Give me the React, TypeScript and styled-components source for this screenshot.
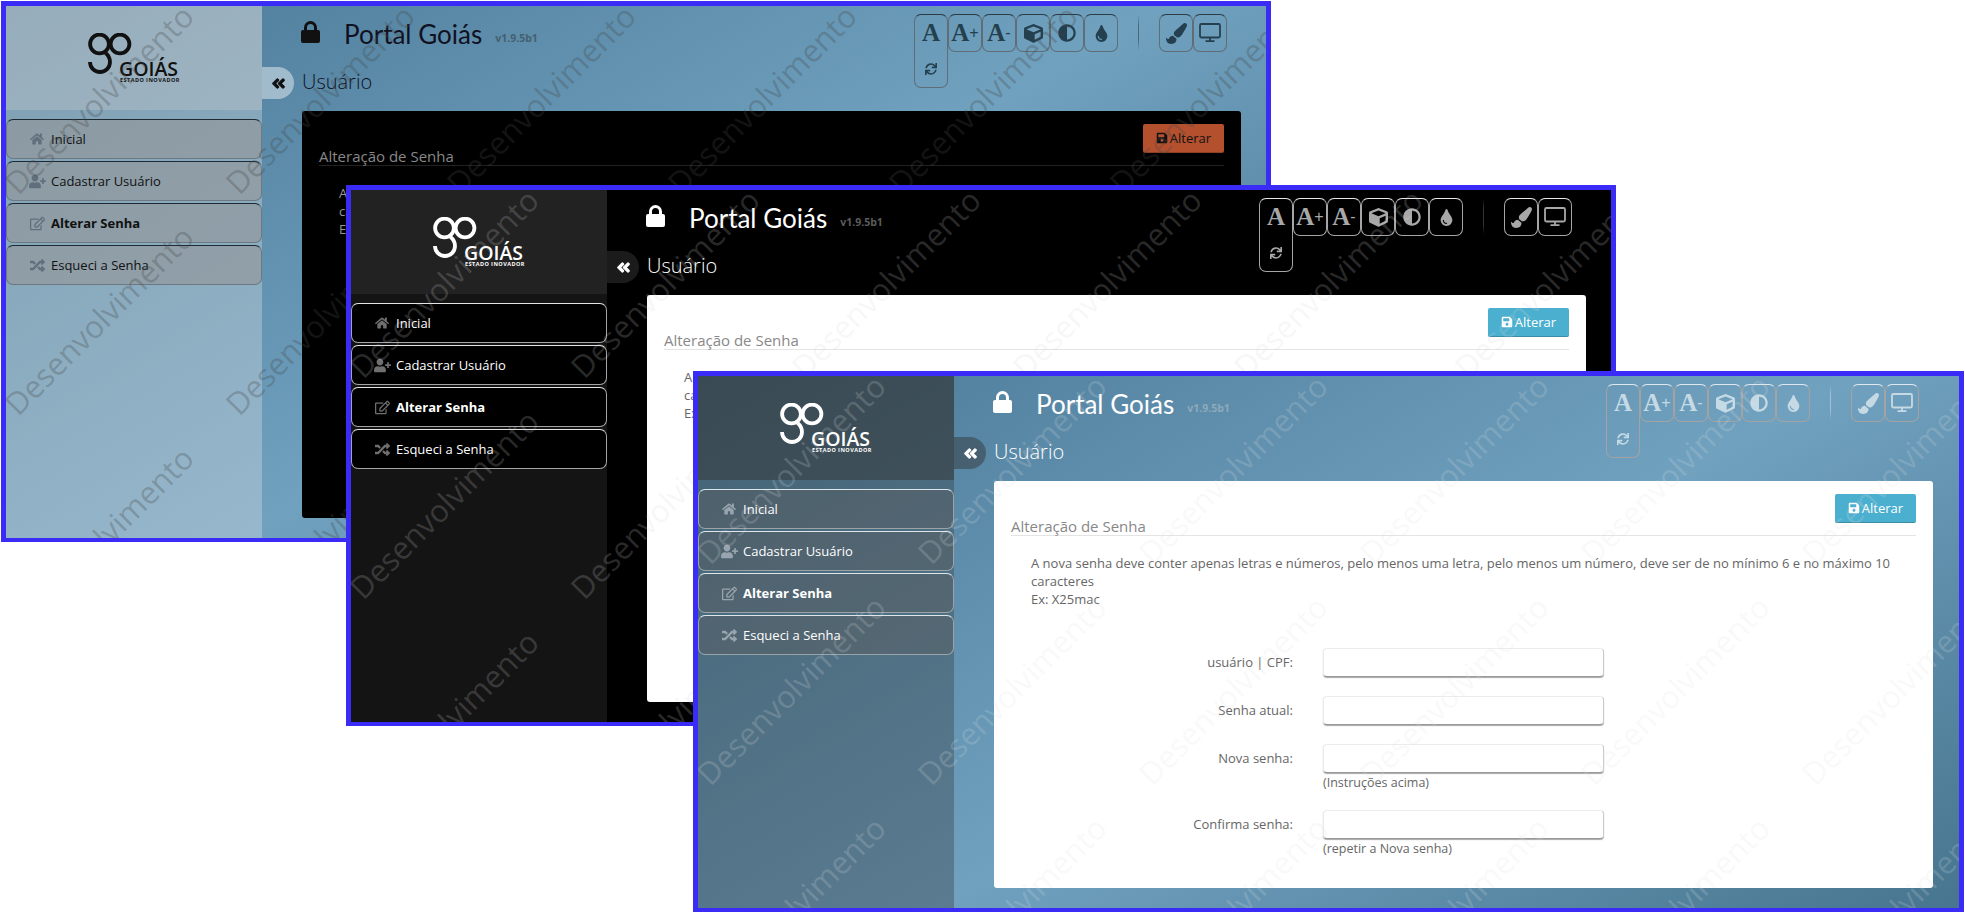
import styled, { createGlobalStyle, ThemeProvider } from "styled-components";
import {
  FaAdjust,
  FaAngleDoubleLeft,
  FaCube,
  FaHome,
  FaPaintBrush,
  FaRandom,
  FaRegEdit,
  FaSave,
  FaSync,
  FaTint,
  FaUserPlus,
} from "react-icons/fa";

const colorSchemes = {
  light: {
    header: "rgba(210, 210, 210, 0.3)",
    sidebar: "rgba(230, 230, 230, 0.33)",
    item: "rgba(148, 148, 148, 0.55)",
    itemTop: "#1d2a33",
    itemBottom: "#6d7880",
    itemText: "#111",
    itemIcon: "#5f707c",
    page: "linear-gradient(150deg, #4b7a98 0%, #70a1bf 53%, #47758f 100%)",
    text: "#111",
    heading: "#112",
    version: "#45606f",
    toggle: "rgba(200, 215, 225, 0.65)",
    toggleIcon: "#111",
    tool: "#24404f",
    toolTop: "#2b3a44",
    toolBottom: "#5f6d76",
    divider: "rgba(40, 60, 75, 0.55)",
    card: "#000",
    title: "#888",
    rule: "#222",
    body: "#999",
    button: "#b5502f",
    buttonText: "#111",
    watermark: "rgba(70, 70, 70, 0.3)",
  },
  contrast: {
    header: "#222",
    sidebar: "#141414",
    item: "#000",
    itemTop: "#e4e4e4",
    itemBottom: "#a5a5a5",
    itemText: "#fff",
    itemIcon: "#6f6f6f",
    page: "#000",
    text: "#fff",
    heading: "#fff",
    version: "#5c5c5c",
    toggle: "#1b1b1b",
    toggleIcon: "#fff",
    tool: "#a8a8a8",
    toolTop: "#e8e8e8",
    toolBottom: "#a5a5a5",
    divider: "#333",
    card: "#fff",
    title: "#888",
    rule: "#e4e4e4",
    body: "#666",
    button: "#4bafcf",
    buttonText: "#fff",
    watermark: "rgba(215, 215, 215, 0.2)",
  },
  dark: {
    header: "rgba(48, 48, 48, 0.47)",
    sidebar: "rgba(48, 48, 48, 0.33)",
    item: "rgba(90, 90, 90, 0.4)",
    itemTop: "#dfe6ea",
    itemBottom: "#9aa3a8",
    itemText: "#fff",
    itemIcon: "#98a5ae",
    page: "linear-gradient(150deg, #4b7a98 0%, #70a1bf 53%, #47758f 100%)",
    text: "#fff",
    heading: "#fff",
    version: "#8fa9ba",
    toggle: "rgba(48, 48, 48, 0.45)",
    toggleIcon: "#fff",
    tool: "#c6dae6",
    toolTop: "#dfe8ee",
    toolBottom: "#a3a3a3",
    divider: "rgba(200, 220, 232, 0.55)",
    card: "#fff",
    title: "#888",
    rule: "#e4e4e4",
    body: "#666",
    button: "#4bafcf",
    buttonText: "#fff",
    watermark: "rgba(225, 225, 225, 0.2)",
  },
};

const windows = [
  { scheme: colorSchemes.light, left: 1, top: 1, width: 1260 },
  { scheme: colorSchemes.contrast, left: 346, top: 185, width: 1260 },
  { scheme: colorSchemes.dark, left: 693, top: 371, width: 1261 },
];

const menuItems = [
  { label: "Inicial", icon: <FaHome size={14} /> },
  { label: "Cadastrar Usuário", icon: <FaUserPlus size={17} /> },
  { label: "Alterar Senha", icon: <FaRegEdit size={15} />, active: true },
  { label: "Esqueci a Senha", icon: <FaRandom size={15} /> },
];

const formRows = [
  { label: "usuário | CPF:" },
  { label: "Senha atual:" },
  { label: "Nova senha:", hint: "(Instruções acima)" },
  { label: "Confirma senha:", hint: "(repetir a Nova senha)" },
];

const MonitorIcon = () => (
  <svg width="22" height="20" viewBox="0 0 22 20" fill="none" stroke="currentColor" strokeWidth="1.8">
    <rect x="1" y="1" width="20" height="13.5" rx="1.4" />
    <path d="M11 15v3M6.5 18.2h9" />
  </svg>
);

const LockGlyph = () => (
  <svg width="19" height="22" viewBox="0 0 19 22">
    <rect y="9" width="19" height="13" rx="2" fill="currentColor" />
    <path d="M4.5 10V6.5a5 5 0 0 1 10 0V10" fill="none" stroke="currentColor" strokeWidth="3" />
  </svg>
);

const LogoMark = () => (
  <svg width="44" height="42" viewBox="0 0 44 42" fill="none" stroke="currentColor" strokeWidth="3.8">
    <circle cx="11.5" cy="11" r="9.4" />
    <circle cx="32" cy="11" r="9.4" />
    <path d="M2 29a10 10 0 0 0 20 0c0-4-2-7-4.5-9" />
  </svg>
);

const PortalWindow = ({ width }: { width: number }) => (
  <Frame $width={width}>
    <Sidebar>
      <LogoPanel>
        <Logo>
          <LogoMark />
          <LogoName>GOIÁS</LogoName>
          <LogoTag>ESTADO INOVADOR</LogoTag>
        </Logo>
      </LogoPanel>
      <Menu>
        {menuItems.map((item) => (
          <MenuItem key={item.label} $active={item.active}>
            <MenuIcon>{item.icon}</MenuIcon>
            {item.label}
          </MenuItem>
        ))}
      </Menu>
    </Sidebar>

    <Main>
      <TopBar>
        <LockBox>
          <LockGlyph />
        </LockBox>
        <PortalTitle>Portal Goiás</PortalTitle>
        <Version>v1.9.5b1</Version>
        <Toolbar>
          <ToolButton $tall>
            <ToolRow>
              <FontGlyph>A</FontGlyph>
            </ToolRow>
            <ToolRow>
              <FaSync size={12} />
            </ToolRow>
          </ToolButton>
          <ToolButton>
            <ToolRow>
              <FontGlyph>A</FontGlyph>
              <FontSign>+</FontSign>
            </ToolRow>
          </ToolButton>
          <ToolButton>
            <ToolRow>
              <FontGlyph>A</FontGlyph>
              <FontSign>-</FontSign>
            </ToolRow>
          </ToolButton>
          <ToolButton>
            <ToolRow>
              <FaCube size={19} />
            </ToolRow>
          </ToolButton>
          <ToolButton>
            <ToolRow>
              <FaAdjust size={18} />
            </ToolRow>
          </ToolButton>
          <ToolButton>
            <ToolRow>
              <FaTint size={17} />
            </ToolRow>
          </ToolButton>
          <ToolDivider />
          <ToolButton>
            <ToolRow>
              <FaPaintBrush size={21} />
            </ToolRow>
          </ToolButton>
          <ToolButton>
            <ToolRow>
              <MonitorIcon />
            </ToolRow>
          </ToolButton>
        </Toolbar>
      </TopBar>

      <PageHeading>
        <SidebarToggle>
          <FaAngleDoubleLeft size={15} stroke="currentColor" strokeWidth={36} />
        </SidebarToggle>
        <PageTitle>Usuário</PageTitle>
      </PageHeading>

      <Card>
        <CardHeader>
          <CardTitle>Alteração de Senha</CardTitle>
          <SaveButton>
            <FaSave size={12} />
            Alterar
          </SaveButton>
        </CardHeader>
        <Instructions>
          A nova senha deve conter apenas letras e números, pelo menos uma letra, pelo menos um número, deve ser de no
          mínimo 6 e no máximo 10 caracteres
          <br />
          Ex: X25mac
        </Instructions>
        <Form>
          {formRows.map((row) => (
            <FormRow key={row.label}>
              <FieldLabel>{row.label}</FieldLabel>
              <div>
                <Field />
                {row.hint && <FieldHint>{row.hint}</FieldHint>}
              </div>
            </FormRow>
          ))}
        </Form>
      </Card>
    </Main>

    <Watermarks>
      {Array.from({ length: 18 }, (_, i) => (
        <WatermarkCell key={i}>
          <WatermarkText>Desenvolvimento</WatermarkText>
        </WatermarkCell>
      ))}
    </Watermarks>
  </Frame>
);

const App = () => (
  <>
    <GlobalStyle />
    <Desktop>
      {windows.map((win) => (
        <ThemeProvider key={win.left} theme={win.scheme}>
          <WindowSlot style={{ left: win.left, top: win.top }}>
            <PortalWindow width={win.width} />
          </WindowSlot>
        </ThemeProvider>
      ))}
    </Desktop>
  </>
);

const GlobalStyle = createGlobalStyle`
  html, body {
    margin: 0;
    background: #fff;
    font-family: "Open Sans", "Liberation Sans", sans-serif;
  }
`;

const Desktop = styled.div`
  position: relative;
  width: 1965px;
  height: 914px;
  overflow: hidden;
`;

const WindowSlot = styled.div`
  position: absolute;
`;

const Frame = styled.div<{ $width: number }>`
  position: relative;
  display: flex;
  box-sizing: content-box;
  width: ${(p) => p.$width}px;
  height: 532px;
  overflow: hidden;
  border: 5px solid #3a2bf7;
  border-bottom-width: 4px;
  background: ${(p) => p.theme.page};
`;

const Sidebar = styled.aside`
  flex: 0 0 256px;
  background: ${(p) => p.theme.sidebar};
`;

const LogoPanel = styled.div`
  display: flex;
  align-items: center;
  justify-content: center;
  height: 104px;
  background: ${(p) => p.theme.header};
`;

const Logo = styled.div`
  display: flex;
  flex-direction: column;
  width: 92px;
  height: 50px;
  color: ${(p) => p.theme.text};
`;

const LogoName = styled.span`
  margin: -15px 0 0 31px;
  font-size: 19.5px;
  font-weight: 600;
  line-height: 18px;
`;

const LogoTag = styled.span`
  margin-left: 32px;
  font-size: 5.5px;
  font-weight: 700;
  line-height: 5px;
  letter-spacing: 0.45px;
  white-space: nowrap;
`;

const Menu = styled.nav`
  display: flex;
  flex-direction: column;
  gap: 2px;
  margin-top: 9px;
`;

const MenuItem = styled.a<{ $active?: boolean }>`
  display: flex;
  align-items: center;
  height: 40px;
  box-sizing: border-box;
  padding-left: 20px;
  border: 1px solid ${(p) => p.theme.itemBottom};
  border-top-color: ${(p) => p.theme.itemTop};
  border-radius: 7px;
  background: ${(p) => p.theme.item};
  color: ${(p) => p.theme.itemText};
  font-size: 13px;
  font-weight: ${(p) => (p.$active ? 700 : 400)};
`;

const MenuIcon = styled.span`
  display: flex;
  justify-content: center;
  width: 20px;
  margin-right: 4px;
  color: ${(p) => p.theme.itemIcon};
`;

const Main = styled.main`
  flex: 0 0 1005px;
`;

const TopBar = styled.header`
  display: flex;
  align-items: flex-start;
  height: 61px;
  padding: 8px 40px 0 39px;
  box-sizing: border-box;
`;

const LockBox = styled.span`
  display: flex;
  margin-top: 7px;
  color: ${(p) => p.theme.text};
`;

const PortalTitle = styled.h1`
  margin: 0 0 0 24px;
  color: ${(p) => p.theme.heading};
  font-family: Lato, "Open Sans", sans-serif;
  font-size: 26px;
  font-weight: 400;
  line-height: 40px;
`;

const Version = styled.span`
  margin: 16px 0 0 13px;
  color: ${(p) => p.theme.version};
  font-size: 10.5px;
  font-weight: 700;
  line-height: 16px;
`;

const Toolbar = styled.div`
  display: flex;
  align-items: flex-start;
  margin-left: auto;
`;

const ToolButton = styled.button<{ $tall?: boolean }>`
  display: flex;
  flex-direction: column;
  width: 34px;
  height: ${(p) => (p.$tall ? "74px" : "38px")};
  padding: 0;
  box-sizing: border-box;
  background: transparent;
  border: 1px solid ${(p) => p.theme.toolBottom};
  border-top-color: ${(p) => p.theme.toolTop};
  border-radius: 7px;
  color: ${(p) => p.theme.tool};
`;

const ToolRow = styled.span`
  display: flex;
  flex: 0 0 36px;
  align-items: center;
  justify-content: center;
  width: 100%;
`;

const FontGlyph = styled.span`
  font-family: "Liberation Serif", serif;
  font-size: 25px;
  font-weight: 700;
  line-height: 36px;
`;

const FontSign = styled.span`
  font-size: 16px;
  line-height: 36px;
`;

const ToolDivider = styled.span`
  width: 1px;
  height: 37px;
  margin: 0 20px;
  background: linear-gradient(transparent, ${(p) => p.theme.divider} 30%, ${(p) => p.theme.divider} 70%, transparent);
`;

const PageHeading = styled.div`
  display: flex;
  align-items: center;
  gap: 8px;
  height: 32px;
`;

const SidebarToggle = styled.div`
  display: flex;
  align-items: center;
  justify-content: center;
  width: 32px;
  height: 32px;
  border-radius: 0 16px 16px 0;
  background: ${(p) => p.theme.toggle};
  color: ${(p) => p.theme.toggleIcon};
`;

const PageTitle = styled.h2`
  margin: -3px 0 0;
  color: ${(p) => p.theme.heading};
  font-size: 20px;
  font-weight: 300;
`;

const Card = styled.section`
  box-sizing: border-box;
  width: 939px;
  height: 407px;
  margin: 12px 0 0 40px;
  padding: 13px 17px 0 17px;
  border-radius: 3px;
  background: ${(p) => p.theme.card};
`;

const CardHeader = styled.div`
  display: flex;
  align-items: flex-start;
  justify-content: space-between;
  height: 42px;
  box-sizing: border-box;
  border-bottom: 1px solid ${(p) => p.theme.rule};
`;

const CardTitle = styled.h3`
  margin: 24px 0 0;
  color: ${(p) => p.theme.title};
  font-size: 15px;
  font-weight: 400;
  line-height: 16px;
`;

const SaveButton = styled.button`
  display: flex;
  align-items: center;
  justify-content: center;
  gap: 2px;
  width: 81px;
  height: 29px;
  padding: 0;
  border: 0;
  border-bottom: 1px solid rgba(0, 0, 0, 0.2);
  border-radius: 2px;
  background: ${(p) => p.theme.button};
  color: ${(p) => p.theme.buttonText};
  font-family: inherit;
  font-size: 13px;
`;

const Instructions = styled.p`
  width: 870px;
  margin: 18px 0 0 20px;
  color: ${(p) => p.theme.body};
  font-size: 13px;
  line-height: 18px;
`;

const Form = styled.form`
  display: flex;
  flex-direction: column;
  gap: 19px;
  margin-top: 40px;
`;

const FormRow = styled.div`
  display: grid;
  grid-template-columns: 282px 281px;
  column-gap: 30px;
`;

const FieldLabel = styled.label`
  color: ${(p) => p.theme.body};
  font-size: 13px;
  line-height: 29px;
  text-align: right;
`;

const Field = styled.input`
  display: block;
  width: 100%;
  height: 29px;
  box-sizing: border-box;
  background: #fff;
  border: 1px solid #ececec;
  border-right-color: #ccc;
  border-bottom-color: #999;
  border-radius: 4px;
  box-shadow: 0 1px 1px rgba(0, 0, 0, 0.35);
`;

const FieldHint = styled.div`
  margin-top: 1px;
  color: ${(p) => p.theme.body};
  font-size: 12.5px;
  line-height: 17px;
`;

const Watermarks = styled.div`
  position: absolute;
  top: -18px;
  left: -18px;
  display: grid;
  grid-template-columns: repeat(6, 221px);
  grid-auto-rows: 221px;
  pointer-events: none;
`;

const WatermarkCell = styled.div`
  display: flex;
  align-items: center;
  justify-content: center;
`;

const WatermarkText = styled.span`
  transform: rotate(-45deg);
  color: ${(p) => p.theme.watermark};
  font-size: 31px;
  white-space: nowrap;
`;

export default App;
